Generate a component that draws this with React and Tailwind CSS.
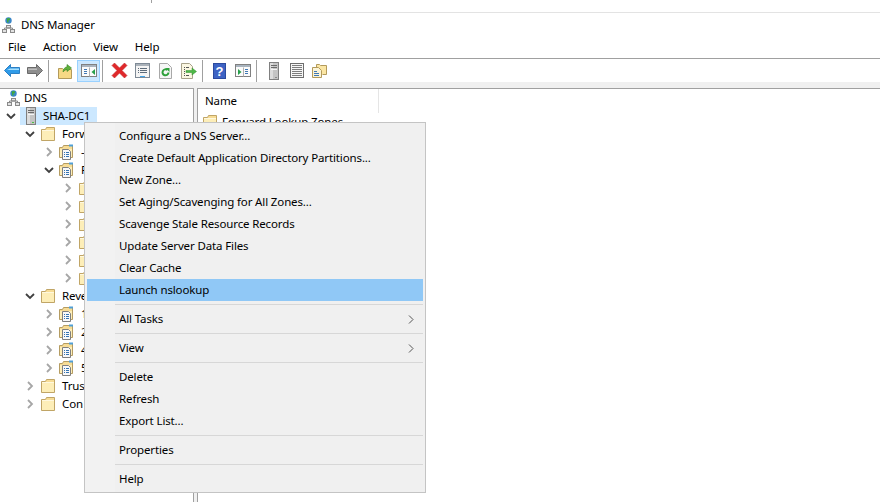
function DnsIcon() {
  return (
    <svg width="13" height="16" viewBox="0 0 13 16" className="shrink-0">
      <rect x="0.500" y="12.500" width="4" height="3" fill="#e2e2e2" stroke="#8a8a8a" />
      <rect x="4.500" y="8.500" width="4" height="2.500" fill="#e2e2e2" stroke="#8a8a8a" />
      <rect x="8.500" y="12.500" width="4" height="3" fill="#e2e2e2" stroke="#8a8a8a" />
      <path d="M2.500 12v-1h8v1" stroke="#8a8a8a" fill="none" />
      <circle cx="6.500" cy="3.500" r="3.200" fill="#3a86c8" />
      <path d="M4.800 1.200h3.200v2H6.500v2.300H5.200z" fill="#3faa3a" />
    </svg>
  );
}

function ServerIcon({ plain }) {
  return (
    <svg width="10" height="18" viewBox="0 0 10 18" className="shrink-0">
      <rect x="0.500" y="0.500" width="9" height="17" fill="#c4c4c4" stroke="#808080" />
      <rect x="1" y="1" width="3" height="16" fill="#dcdcdc" />
      <rect x="2" y="3" width="6" height="1" fill="#6a6a6a" />
      <rect x="2" y="5" width="6" height="1" fill="#6a6a6a" />
      <rect x="2" y="7" width="6" height="1" fill="#f4f4f4" />
      <rect x="6" y="15" width="2" height="1" fill={plain ? "#8a8a8a" : "#4cc244"} />
    </svg>
  );
}

function FolderIcon() {
  return (
    <svg width="14" height="14" viewBox="0 0 14 14" className="shrink-0">
      <path d="M0.500 13.500V2.500h4l1-2h8v13z" fill="#f7dc95" stroke="#c0a566" />
      <rect x="1" y="4" width="12" height="9" fill="#fdeeb8" />
      <rect x="1" y="3" width="12" height="1" fill="#fff8de" />
    </svg>
  );
}

function ZoneIcon() {
  return (
    <svg width="15" height="16" viewBox="0 0 15 16" className="shrink-0">
      <path d="M0.500 13.500V3.500h3l1-2h9v12z" fill="#f7dc95" stroke="#b59c62" />
      <rect x="1" y="5" width="12" height="8" fill="#fdeeb8" />
      <rect x="10" y="0.500" width="4" height="2" fill="#4f9fd8" />
      <path d="M3.500 5.500h6l2 2v8h-8z" fill="#f8f8f8" stroke="#7f7f7f" />
      <path d="M5 8.500h1M7 8.500h3M5 10.500h1M7 10.500h3M5 12.500h1M7 12.500h3" stroke="#3574b3" />
    </svg>
  );
}

function Chevron({ open }) {
  return (
    <svg width="10" height="10" viewBox="0 0 10 10" className="shrink-0">
      {open ? (
        <path d="M1 3l4 4 4-4" fill="none" stroke="#404040" strokeWidth="1.800" />
      ) : (
        <path d="M3 1l4 4-4 4" fill="none" stroke="#a6a6a6" strokeWidth="1.800" />
      )}
    </svg>
  );
}

const treeRows = [
  { id: "dns", pad: "pl-[7px]", icon: "dns", text: "DNS", noChevron: true },
  { id: "server", pad: "pl-[6px]", icon: "server", text: "SHA-DC1", open: true, selected: true },
  { id: "fwd", pad: "pl-[25px]", icon: "folder", text: "Forw", open: true },
  { id: "fz1", pad: "pl-[44px]", icon: "zone", text: "-" },
  { id: "fz2", pad: "pl-[44px]", icon: "zone", text: "F", open: true },
  { id: "s1", pad: "pl-[63px]", icon: "folder" },
  { id: "s2", pad: "pl-[63px]", icon: "folder" },
  { id: "s3", pad: "pl-[63px]", icon: "folder" },
  { id: "s4", pad: "pl-[63px]", icon: "folder" },
  { id: "s5", pad: "pl-[63px]", icon: "folder" },
  { id: "s6", pad: "pl-[63px]", icon: "folder" },
  { id: "rev", pad: "pl-[25px]", icon: "folder", text: "Reve", open: true },
  { id: "rz1", pad: "pl-[44px]", icon: "zone", text: "1" },
  { id: "rz2", pad: "pl-[44px]", icon: "zone", text: "2" },
  { id: "rz3", pad: "pl-[44px]", icon: "zone", text: "4" },
  { id: "rz4", pad: "pl-[44px]", icon: "zone", text: "5" },
  { id: "trust", pad: "pl-[25px]", icon: "folder", text: "Trus" },
  { id: "cond", pad: "pl-[25px]", icon: "folder", text: "Con" },
];

function TreeRow({ row }) {
  if (row.noChevron) {
    return (
      <div className={`flex h-[18px] items-center ${row.pad}`}>
        <DnsIcon />
        <span className="ml-[4px]">{row.text}</span>
      </div>
    );
  }
  return (
    <div className={`flex h-[18px] items-center ${row.pad}`}>
      <span className="flex w-[10px] shrink-0 justify-center">
        <Chevron open={row.open} />
      </span>
      {row.selected ? (
        <span className="ml-[4px] flex h-[18px] items-center bg-[#cce8ff] pl-[6px] pr-[7px]">
          <ServerIcon />
          <span className="ml-[7px] whitespace-nowrap">{row.text}</span>
        </span>
      ) : (
        <span className="ml-[5px] flex items-center whitespace-nowrap">
          <span className="flex w-[15px] justify-center">
            {row.icon === "folder" ? <FolderIcon /> : <ZoneIcon />}
          </span>
          {row.text && <span className="ml-[7px]">{row.text}</span>}
        </span>
      )}
    </div>
  );
}

function Tool({ children, active }) {
  return (
    <span className={`flex h-[22px] w-[23px] shrink-0 items-center justify-center border ${active ? "border-[#99d1ff] bg-[#cce8ff]" : "border-transparent"}`}>
      {children}
    </span>
  );
}

function Sep() {
  return (
    <span className="flex h-[22px] w-[8px] shrink-0 pl-[2px]">
      <span className="h-full w-px bg-[#a0a0a0]" />
    </span>
  );
}

function ConsoleIcon({ side }) {
  return (
    <svg width="16" height="13" viewBox="0 0 16 13">
      <rect x="0.500" y="0.500" width="15" height="12" fill="#fbfbfb" stroke="#808080" />
      <rect x="1" y="1" width="14" height="2" fill="#a9b4bf" />
      <path d="M8.500 3.500v9" stroke="#b0b0b0" />
      {side === "left" ? (
        <>
          <path d="M3 5.500h3M3 7.500h3M3 9.500h3" stroke="#3f78b5" />
          <path d="M14 5v6l-3.500-3z" fill="#27a04a" />
        </>
      ) : (
        <>
          <path d="M3 5v6l3.500-3z" fill="#27a04a" />
          <path d="M10 5.500h3M10 7.500h3M10 9.500h3" stroke="#3f78b5" />
        </>
      )}
    </svg>
  );
}

function Toolbar() {
  return (
    <div className="flex h-[24px] items-center border-t border-[#a0a0a0] bg-white">
      <Tool>
        <svg width="16" height="13" viewBox="0 0 16 13">
          <path d="M0.500 6.500l6-6v3h9v6h-9v3z" fill="#2f9be8" stroke="#2b7fc4" />
          <path d="M6 4.500h9v1.500H3z" fill="#a8dffc" />
        </svg>
      </Tool>
      <Tool>
        <svg width="16" height="13" viewBox="0 0 16 13">
          <path d="M15.500 6.500l-6-6v3h-9v6h9v3z" fill="#8e8e8e" stroke="#6a6a6a" />
          <path d="M1 4.500h9v1.500H1z" fill="#bcbcbc" />
        </svg>
      </Tool>
      <Sep />
      <Tool>
        <svg width="15" height="16" viewBox="0 0 15 16">
          <path d="M0.500 15.500v-10h4l1 1h8v9z" fill="#f7d985" stroke="#b39a5b" />
          <path d="M5 9c0-3 2-5 4-5V1.500l4.500 3.500L9 8.500V6.500C7.500 6.500 6 8 5 9z" fill="#5fb03c" stroke="#3b8524" strokeWidth="0.600" />
        </svg>
      </Tool>
      <Tool active>
        <ConsoleIcon side="left" />
      </Tool>
      <Sep />
      <Tool>
        <svg width="17" height="17" viewBox="0 0 17 17">
          <path d="M1 3.500L3.500 1 8.500 6l5-5L16 3.500l-5 5 5 5-2.500 2.500-5-5-5 5L1 13.500l5-5z" fill="#e0282a" stroke="#c22a2c" strokeWidth="0.600" />
        </svg>
      </Tool>
      <Tool>
        <svg width="15" height="15" viewBox="0 0 15 15">
          <rect x="0.500" y="0.500" width="14" height="14" fill="#f4f4f4" stroke="#7e8a96" />
          <rect x="1" y="1" width="13" height="2" fill="#aab2ba" />
          <path d="M3 5.500h1M5 5.500h7M3 7.500h1M5 7.500h7M3 9.500h1M5 9.500h7" stroke="#5c6b7a" />
          <rect x="5" y="13" width="5" height="1" fill="#3fa4ea" />
        </svg>
      </Tool>
      <Tool>
        <svg width="13" height="16" viewBox="0 0 13 16">
          <path d="M0.500 0.500h8l4 4v11h-12z" fill="#f6f6f6" stroke="#a8a8a8" />
          <path d="M9.500 9.500a3 3 0 1 1-1-2.400" fill="none" stroke="#2da03a" strokeWidth="2" />
          <path d="M6.500 5h4v4z" fill="#2da03a" />
        </svg>
      </Tool>
      <Tool>
        <svg width="16" height="16" viewBox="0 0 16 16">
          <path d="M0.500 0.500h8l3 3v12h-11z" fill="#fbf7e2" stroke="#a8a28a" />
          <path d="M3 4.500h1M5 4.500h3M3 6.500h1M3 8.500h1M3 10.500h1M3 12.500h1M5 12.500h3" stroke="#555" />
          <path d="M5 7.500h6V5l4.500 3.500L11 12V9.500H5z" fill="#4fb848" stroke="#33902c" strokeWidth="0.500" />
        </svg>
      </Tool>
      <Sep />
      <Tool>
        <svg width="13" height="16" viewBox="0 0 13 16">
          <rect width="13" height="16" fill="#2b4a9f" />
          <rect x="1" y="1" width="11" height="14" fill="#3d63c4" />
          <text x="6.500" y="13" textAnchor="middle" fontSize="13" fontWeight="700" fill="#fff" fontFamily="Liberation Sans, sans-serif">?</text>
        </svg>
      </Tool>
      <Tool>
        <ConsoleIcon side="right" />
      </Tool>
      <Sep />
      <Tool>
        <ServerIcon plain />
      </Tool>
      <Tool>
        <svg width="14" height="15" viewBox="0 0 14 15">
          <rect x="0.500" y="0.500" width="13" height="14" fill="#f6f6f6" stroke="#6e6e6e" />
          <path d="M2 2.500h10M2 4.500h10M2 6.500h10M2 8.500h10M2 10.500h10M2 12.500h10" stroke="#7d7d7d" />
        </svg>
      </Tool>
      <Tool>
        <svg width="15" height="15" viewBox="0 0 15 15">
          <path d="M4.500 5V1.500h3l1 1h6v9h-4" fill="#fbe6a4" stroke="#b39a5b" />
          <path d="M0.500 4.500h6l3 3v7h-9z" fill="#fbf4d8" stroke="#b39a5b" />
          <path d="M2 8.500h3M2 10.500h5M2 12.500h5" stroke="#3f78b5" />
        </svg>
      </Tool>
    </div>
  );
}

function MenuItem({ text, hot, sub }) {
  return (
    <div className={`relative flex h-[22px] items-center pb-px pl-[32px] ${hot ? "bg-[#90c8f6]" : ""}`}>
      <span className="whitespace-nowrap">{text}</span>
      {sub && (
        <svg width="6" height="9" viewBox="0 0 6 9" className="absolute right-[9px] top-[7px]">
          <path d="M1 0.500l4 4-4 4" fill="none" stroke="#555" />
        </svg>
      )}
    </div>
  );
}

function MenuSep() {
  return <div className="my-[3px] ml-[28px] h-px bg-[#d7d7d7]" />;
}

function ContextMenu() {
  return (
    <div className="absolute left-[84px] top-[122px] w-[342px] border border-[#c4c4c4] bg-[#f0f0f0] p-[2px]">
      <div className="absolute bottom-0 left-0 top-0 w-[30px] bg-[#f2f2f2]" />
      <div className="relative">
        <MenuItem text="Configure a DNS Server..." />
        <MenuItem text="Create Default Application Directory Partitions..." />
        <MenuItem text="New Zone..." />
        <MenuItem text="Set Aging/Scavenging for All Zones..." />
        <MenuItem text="Scavenge Stale Resource Records" />
        <MenuItem text="Update Server Data Files" />
        <MenuItem text="Clear Cache" />
        <MenuItem text="Launch nslookup" hot />
        <MenuSep />
        <MenuItem text="All Tasks" sub />
        <MenuSep />
        <MenuItem text="View" sub />
        <MenuSep />
        <MenuItem text="Delete" />
        <MenuItem text="Refresh" />
        <MenuItem text="Export List..." />
        <MenuSep />
        <MenuItem text="Properties" />
        <MenuSep />
        <MenuItem text="Help" />
      </div>
    </div>
  );
}

export default function App() {
  return (
    <div className="relative flex h-[502px] w-[880px] flex-col overflow-hidden bg-white font-['Noto_Sans',sans-serif] text-[11.5px] tracking-[-0.13px] text-[#000]">
      <div className="h-[13px] border-b border-[#e3e3e3] pl-[151px]">
        <div className="h-[3px] w-px bg-[#a0a0a0]" />
      </div>
      <div className="flex h-[24px] items-center pl-[2px]">
        <DnsIcon />
        <span className="ml-[6px]">DNS Manager</span>
      </div>
      <div className="flex h-[21px] items-center gap-[17px] pb-[2px] pl-[8px]">
        <span>File</span>
        <span>Action</span>
        <span>View</span>
        <span>Help</span>
      </div>
      <Toolbar />
      <div className="flex min-h-0 flex-1 bg-[#f0f0f0] pt-[6px]">
        <div className="w-[194px] border-r border-t border-[#a0a0a0] bg-white">
          {treeRows.map((row) => (
            <TreeRow key={row.id} row={row} />
          ))}
        </div>
        <div className="ml-[3px] flex-1 border-l border-t border-[#a0a0a0] bg-white">
          <div className="flex h-[24px] w-[181px] items-center border-r border-[#e5e5e5] pl-[7px]">Name</div>
          <div className="flex h-[18px] items-center pl-[5px]">
            <FolderIcon />
            <span className="ml-[5px] whitespace-nowrap">Forward Lookup Zones</span>
          </div>
        </div>
      </div>
      <ContextMenu />
    </div>
  );
}
